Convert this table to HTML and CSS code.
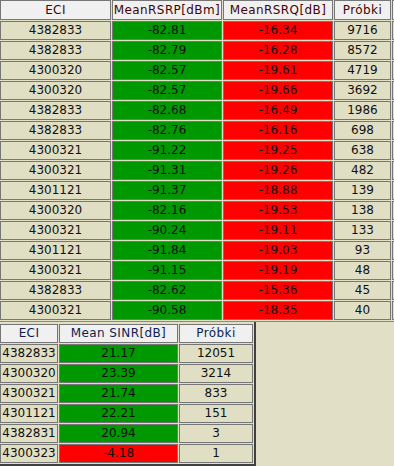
FILE: index.html
```html
<!DOCTYPE html>
<html>
<head>
<meta charset="utf-8">
<link rel="stylesheet" href="styles.css">
</head>
<body>
<div class="page">
  <div class="top">
    <table class="grid grid-top">
      <colgroup>
        <col class="c-eci"><col class="c-rsrp"><col class="c-rsrq"><col class="c-prob"><col class="c-more">
      </colgroup>
      <thead>
        <tr class="head"><th>ECI</th><th>MeanRSRP[dBm]</th><th>MeanRSRQ[dB]</th><th>Próbki</th><th></th></tr>
      </thead>
      <tbody>
        <tr><td class="b">4382833</td><td class="g">-82.81</td><td class="r">-16.34</td><td class="b">9716</td><td class="b"></td></tr>
        <tr><td class="b">4382833</td><td class="g">-82.79</td><td class="r">-16.28</td><td class="b">8572</td><td class="b"></td></tr>
        <tr><td class="b">4300320</td><td class="g">-82.57</td><td class="r">-19.61</td><td class="b">4719</td><td class="b"></td></tr>
        <tr><td class="b">4300320</td><td class="g">-82.57</td><td class="r">-19.66</td><td class="b">3692</td><td class="b"></td></tr>
        <tr><td class="b">4382833</td><td class="g">-82.68</td><td class="r">-16.49</td><td class="b">1986</td><td class="b"></td></tr>
        <tr><td class="b">4382833</td><td class="g">-82.76</td><td class="r">-16.16</td><td class="b">698</td><td class="b"></td></tr>
        <tr><td class="b">4300321</td><td class="g">-91.22</td><td class="r">-19.25</td><td class="b">638</td><td class="b"></td></tr>
        <tr><td class="b">4300321</td><td class="g">-91.31</td><td class="r">-19.26</td><td class="b">482</td><td class="b"></td></tr>
        <tr><td class="b">4301121</td><td class="g">-91.37</td><td class="r">-18.88</td><td class="b">139</td><td class="b"></td></tr>
        <tr><td class="b">4300320</td><td class="g">-82.16</td><td class="r">-19.53</td><td class="b">138</td><td class="b"></td></tr>
        <tr><td class="b">4300321</td><td class="g">-90.24</td><td class="r">-19.11</td><td class="b">133</td><td class="b"></td></tr>
        <tr><td class="b">4301121</td><td class="g">-91.84</td><td class="r">-19.03</td><td class="b">93</td><td class="b"></td></tr>
        <tr><td class="b">4300321</td><td class="g">-91.15</td><td class="r">-19.19</td><td class="b">48</td><td class="b"></td></tr>
        <tr><td class="b">4382833</td><td class="g">-82.62</td><td class="r">-15.36</td><td class="b">45</td><td class="b"></td></tr>
        <tr><td class="b">4300321</td><td class="g">-90.58</td><td class="r">-18.35</td><td class="b">40</td><td class="b"></td></tr>
      </tbody>
    </table>
  </div>
  <div class="bottom">
    <table class="grid grid-sinr">
      <colgroup>
        <col class="s-eci"><col class="s-sinr"><col class="s-prob">
      </colgroup>
      <thead>
        <tr class="head head-blue"><th>ECI</th><th>Mean SINR[dB]</th><th>Próbki</th></tr>
      </thead>
      <tbody>
        <tr><td class="b">4382833</td><td class="g">21.17</td><td class="b">12051</td></tr>
        <tr><td class="b">4300320</td><td class="g">23.39</td><td class="b">3214</td></tr>
        <tr><td class="b">4300321</td><td class="g">21.74</td><td class="b">833</td></tr>
        <tr><td class="b">4301121</td><td class="g">22.21</td><td class="b">151</td></tr>
        <tr><td class="b">4382831</td><td class="g">20.94</td><td class="b">3</td></tr>
        <tr><td class="b">4300323</td><td class="r">-4.18</td><td class="b">1</td></tr>
      </tbody>
    </table>
  </div>
</div>
</body>
</html>
```

FILE: styles.css
```css
html, body {
  margin: 0;
  padding: 0;
  background: #e1dfc5;
  overflow: hidden;
}

.page {
  width: 394px;
  height: 466px;
  overflow: hidden;
  font-family: "DejaVu Sans", Verdana, sans-serif;
  font-size: 12px;
  color: #101010;
}

.top {
  border-bottom: 1px solid #8a8a80;
  overflow: hidden;
}

.grid {
  border-collapse: separate;
  border-spacing: 1px;
  table-layout: fixed;
  margin: -1px 0 0 -1px;
}

.grid-top {
  width: 454px;
}

.grid th,
.grid td {
  border: 1px solid #767676;
  padding: 0;
  height: 17px;
  line-height: 17px;
  text-align: center;
  white-space: nowrap;
  overflow: hidden;
  font-weight: normal;
}

.grid th {
  letter-spacing: 0.4px;
}

.grid-top .head th {
  height: 18px;
}

.c-eci { width: 111px; }
.c-rsrp { width: 110px; }
.c-rsrq { width: 110px; }
.c-prob { width: 57px; }
.c-more { width: 60px; }

.head th {
  background: #f0f0f0;
  color: #420404;
}

.head-blue th {
  color: #0c1d52;
}

.b { background: #e0dfc4; }
.g { background: #009800; }
.r { background: #ff0000; }

.bottom {
  width: 254px;
  padding-top: 1px;
  border-right: 2px solid #404040;
  border-bottom: 2px solid #404040;
  overflow: hidden;
}

.grid-sinr {
  width: 255px;
  margin-top: 0;
}

.s-eci { width: 58px; }
.s-sinr { width: 119px; }
.s-prob { width: 74px; }
```
